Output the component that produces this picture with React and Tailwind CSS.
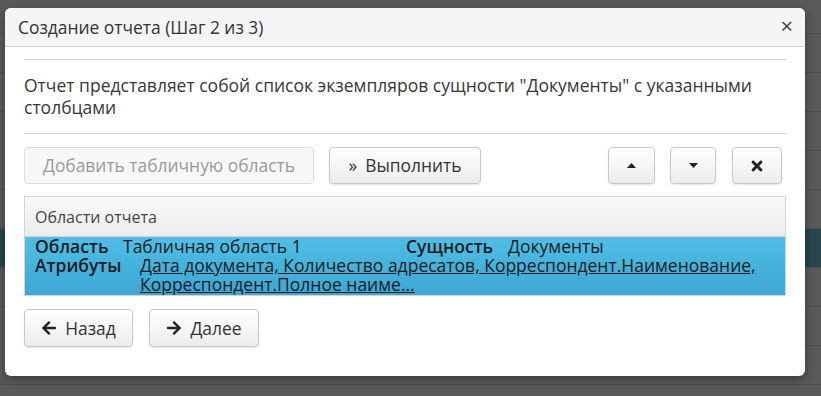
import React from "react";
import { FaArrowLeft, FaArrowRight, FaTimes } from "react-icons/fa";

const font = { fontFamily: "'Open Sans', 'Noto Sans', sans-serif" };

function Caret({ up }) {
  return (
    <svg width="9" height="5" viewBox="0 0 9 5">
      <path d={up ? "M0 5 L4.5 0 L9 5 Z" : "M0 0 L4.5 5 L9 0 Z"} fill="#222" />
    </svg>
  );
}

function Btn({ children, className = "", disabled }) {
  return (
    <button
      className={`flex items-center justify-center gap-2 h-[37px] rounded-[4px] border text-[17.4px] ${
        disabled
          ? "border-[#dcdcdc] bg-[#f7f7f7] text-[#9a9a9a]"
          : "border-[#c8c8c8] bg-gradient-to-b from-white to-[#ececec] text-[#333] shadow-[0_1px_2px_rgba(0,0,0,0.1)]"
      } ${className}`}
    >
      {children}
    </button>
  );
}

export default function App() {
  const rows = [0, 1, 2, 3, 4, 5, 6, 7, 8, 9];
  return (
    <div className="relative w-[821px] h-[396px] overflow-hidden bg-[#595959]" style={font}>
      {/* dimmed page behind */}
      <div className="flex flex-col pt-[33px]">
        {rows.map((r) => (
          <div
            key={r}
            className={`h-[39px] border-t border-[#4e4e4e] ${r === 5 ? "bg-[#29464f]" : ""}`}
          />
        ))}
      </div>

      <div className="absolute left-[5px] top-[8px] w-[800px] h-[368px] rounded-[6px] bg-white shadow-[0_3px_10px_rgba(0,0,0,0.35)] flex flex-col">
        <div className="h-[39px] flex items-center justify-between pl-[13px] pr-[12px] bg-[#f5f5f5] border-b border-[#cfcfcf] rounded-t-[6px]">
          <span className="text-[17.4px] text-[#333]">Создание отчета (Шаг 2 из 3)</span>
          <span className="text-[22px] leading-none text-[#444] -mt-[4px]">×</span>
        </div>

        <div className="flex flex-col px-[19px]">
          <div className="mt-[12px] border-t border-[#cfcfcf]" />
          <p className="mt-[14px] text-[17.5px] leading-[22px] text-[#383838]">
            Отчет представляет собой список экземпляров сущности "Документы" с указанными столбцами
          </p>
          <div className="mt-[15px] border-t border-[#cfcfcf]" />

          <div className="mt-[13px] flex items-center">
            <Btn disabled className="w-[290px]">Добавить табличную область</Btn>
            <Btn className="ml-[15px] w-[152px]">
              <span>»</span>
              <span>Выполнить</span>
            </Btn>
            <div className="flex-1" />
            <Btn className="w-[47px]">
              <Caret up />
            </Btn>
            <Btn className="ml-[15px] w-[46px]">
              <Caret />
            </Btn>
            <Btn className="ml-[16px] mr-[4px] w-[50px]">
              <FaTimes className="text-[16px] text-[#222]" />
            </Btn>
          </div>

          <div className="mt-[12px] border border-[#d4d4d4]">
            <div className="h-[40px] flex items-center px-[10px] bg-gradient-to-b from-[#f9f9f9] to-[#ececec] border-b border-[#d4d4d4] text-[16px] text-[#444]">
              Области отчета
            </div>
            <div className="bg-gradient-to-b from-[#4ebfe6] to-[#3ea6d3] px-[10px] pb-[1px] text-[17.5px] leading-[19px] text-[#1b1b1b]">
              <div className="flex">
                <span className="font-semibold w-[88px] shrink-0">Область</span>
                <span className="w-[283px] shrink-0">Табличная область 1</span>
                <span className="font-semibold w-[102px] shrink-0">Сущность</span>
                <span>Документы</span>
              </div>
              <div className="flex">
                <span className="font-semibold w-[105px] shrink-0">Атрибуты</span>
                <span className="underline">
                  Дата документа, Количество адресатов, Корреспондент.Наименование, Корреспондент.Полное наиме...
                </span>
              </div>
            </div>
          </div>

          <div className="mt-[13px] flex">
            <Btn className="w-[109px] h-[38px]">
              <FaArrowLeft className="text-[16px] text-[#222]" />
              <span>Назад</span>
            </Btn>
            <Btn className="ml-[16px] w-[110px] h-[38px]">
              <FaArrowRight className="text-[16px] text-[#222]" />
              <span>Далее</span>
            </Btn>
          </div>
        </div>
      </div>
    </div>
  );
}
